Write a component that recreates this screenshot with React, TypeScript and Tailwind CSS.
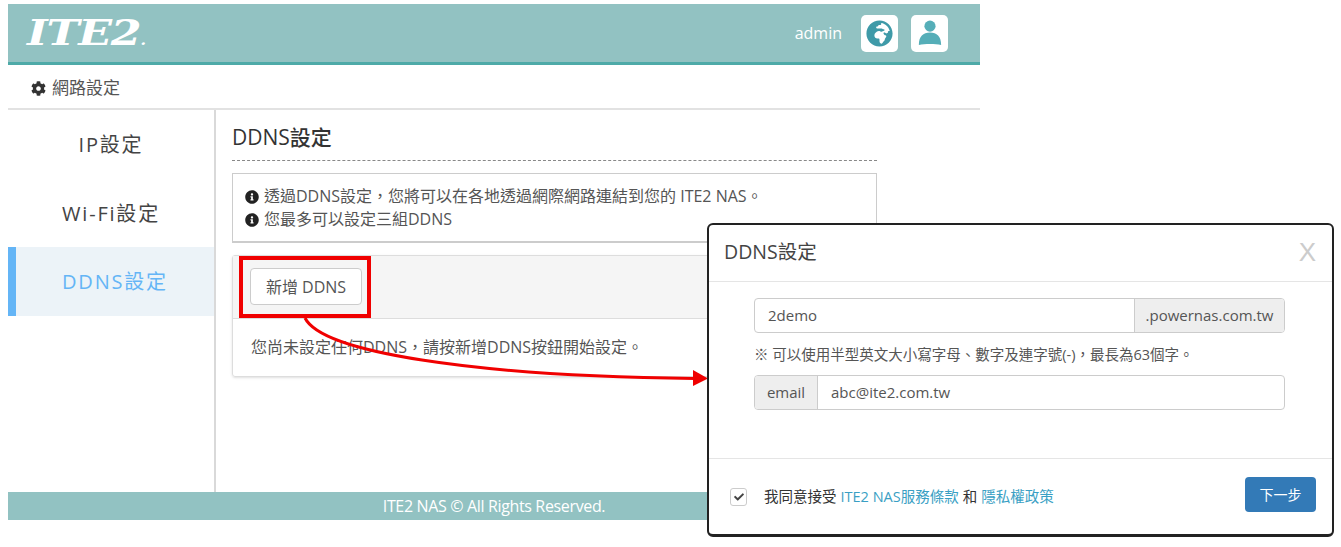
import { FaCheck, FaCog, FaGlobeAfrica, FaInfoCircle } from "react-icons/fa";

const bodyFont = "font-['Open_Sans','Noto_Sans_CJK_TC',sans-serif]";

function SideItem({ label, active }: { label: string; active?: boolean }) {
    return (
        <div
            className={
                active
                    ? "h-[68.5px] pt-[2px] flex items-center justify-center border-l-8 border-[#64b5f6] bg-[#ecf3f8] text-[#64b5f6] text-[20px] tracking-[1.8px]"
                    : "h-[68.5px] pt-[2px] flex items-center justify-center text-[#444] text-[20px] tracking-[1.8px]"
            }
        >
            {label}
        </div>
    );
}

function App() {
    return (
        <div className={`relative w-[1341px] h-[547px] overflow-hidden bg-white pt-1 pl-2 text-[#555] ${bodyFont}`}>
            <div className="w-[972px] h-[516px] flex flex-col">
                {/* Header */}
                <header className="h-[61px] shrink-0 bg-[#92c2c2] border-b-[3px] border-[#4eaaa8] flex items-center justify-between pl-[19px] pr-8">
                    <div className="text-white text-[36px] leading-none font-bold italic font-['DejaVu_Serif',serif] origin-left scale-x-[1.23] tracking-[-1px] mt-[-2px]">
                        ITE2<span className="text-[14px]">.</span>
                    </div>
                    <div className="flex items-center">
                        <span className="text-white text-[16px] mr-[19px]">admin</span>
                        <div className="w-[37px] h-[37px] rounded-[5px] bg-white flex items-center justify-center mr-[13px]">
                            <FaGlobeAfrica className="text-[#3f9aa8] text-[27px]" />
                        </div>
                        <div className="w-[37px] h-[37px] rounded-[5px] bg-white flex items-center justify-center">
                            <svg viewBox="0 0 28 32" className="w-[24px] h-[28px]" fill="#55aeb8">
                                <circle cx="14" cy="8" r="6.5" />
                                <path d="M1 30 C1 20 6 15.5 14 15.5 C22 15.5 27 20 27 30 C20 28.5 8 28.5 1 30 Z" />
                            </svg>
                        </div>
                    </div>
                </header>

                {/* Breadcrumb */}
                <div className="h-[45px] shrink-0 border-b-2 border-[#e2e2e2] flex items-center pl-[23px] pt-[3px] text-[17px] text-[#555] gap-[6px]">
                    <FaCog className="text-[#333] text-[15px]" />
                    <span>網路設定</span>
                </div>

                <div className="flex-1 flex min-h-0">
                    {/* Sidebar */}
                    <aside className="w-[208px] shrink-0 border-r-2 border-[#d9d9d9]">
                        <SideItem label="IP設定" />
                        <SideItem label="Wi-Fi設定" />
                        <SideItem label="DDNS設定" active />
                    </aside>

                    {/* Content */}
                    <main className="w-[645px] ml-[16px] pt-[13px]">
                        <h2 className="h-[38px] text-[21px] leading-[28px] font-medium text-[#333] border-b border-dashed border-[#888]">
                            DDNS設定
                        </h2>
                        <div className="mt-3 h-[70px] border border-[#ccc] border-b-2 px-3 pt-[11px] text-[16px] leading-[23px] text-[#555]">
                            <div className="flex items-center gap-[5px]">
                                <FaInfoCircle className="text-[#222] text-[14px]" />
                                <span>透過DDNS設定，您將可以在各地透過網際網路連結到您的 ITE2 NAS。</span>
                            </div>
                            <div className="flex items-center gap-[5px]">
                                <FaInfoCircle className="text-[#222] text-[14px]" />
                                <span>您最多可以設定三組DDNS</span>
                            </div>
                        </div>
                        <div className="mt-3 h-[122px] border border-[#ddd] rounded-[3px] shadow-sm">
                            <div className="h-[63px] bg-[#f5f5f5] border-b border-[#ddd] pl-[17px] pt-3">
                                <button className="w-[112px] h-[37px] bg-white border border-[#ccc] rounded-[4px] text-[16px] text-[#555]">
                                    新增 DDNS
                                </button>
                            </div>
                            <div className="pl-[18px] pt-[17px] text-[16px] leading-[22px] text-[#555]">
                                您尚未設定任何DDNS，請按新增DDNS按鈕開始設定。
                            </div>
                        </div>
                    </main>
                </div>

                {/* Footer */}
                <footer className="h-[28px] shrink-0 bg-[#92c2c2] flex items-center justify-center text-white text-[16px] tracking-[-0.35px]">
                    ITE2 NAS © All Rights Reserved.
                </footer>
            </div>

            {/* Callout: red box and arrow */}
            <div className="absolute left-[239px] top-[256px] w-[132px] h-[62px] border-4 border-[#f00000]" />
            <svg className="absolute left-0 top-0 pointer-events-none" width="1341" height="547" fill="none">
                <path d="M305 318 C 322 352, 470 376, 695 378.5" stroke="#f00000" strokeWidth="3" />
                <polygon points="693,370 708,378.5 693,386" fill="#f00000" />
            </svg>

            {/* Modal */}
            <div className="absolute left-[707px] top-[223px] w-[627px] h-[314px] flex flex-col bg-white border-2 border-[#222] rounded-[6px] border-b-[3px]">
                <div className="h-[57px] shrink-0 border-b border-[#e5e5e5] flex items-center justify-between pl-[15px] pr-[16px] pb-[2px]">
                    <span className="text-[19.5px] text-[#444]">DDNS設定</span>
                    <span className="text-[26px] text-[#ccc] font-['Liberation_Sans',sans-serif]">X</span>
                </div>
                <div className="flex-1 pt-[16px] px-[45px]">
                    <div className="flex h-[35px] w-[531px] border border-[#ccc] rounded-[4px] overflow-hidden text-[15px] text-[#555]">
                        <div className="flex-1 flex items-center pl-[13px]">2demo</div>
                        <div className="w-[150px] flex items-center justify-center bg-[#eee] border-l border-[#ccc]">
                            .powernas.com.tw
                        </div>
                    </div>
                    <p className="mt-3 text-[14.5px] leading-[20px] text-[#555] whitespace-nowrap">
                        ※ 可以使用半型英文大小寫字母、數字及連字號(-)，最長為63個字。
                    </p>
                    <div className="mt-[10px] flex h-[35px] w-[531px] border border-[#ccc] rounded-[4px] overflow-hidden text-[15px] text-[#555]">
                        <div className="w-[63px] flex items-center justify-center bg-[#eee] border-r border-[#ccc]">
                            email
                        </div>
                        <div className="flex-1 flex items-center pl-[13px]">abc@ite2.com.tw</div>
                    </div>
                </div>
                <div className="h-[76px] shrink-0 border-t border-[#e5e5e5] flex items-center justify-between pl-[21px] pr-[16px]">
                    <div className="flex items-center text-[14.5px] text-[#333]">
                        <span className="w-[17px] h-[18px] mt-[1px] border border-[#ccc] rounded-[3px] flex items-center justify-center mr-[17px]">
                            <FaCheck className="text-[#444] text-[10px]" />
                        </span>
                        <span>我同意接受</span>
                        <span className="text-[#3a9fc4] ml-1">ITE2 NAS服務條款</span>
                        <span className="mx-1">和</span>
                        <span className="text-[#3a9fc4]">隱私權政策</span>
                    </div>
                    <button className="w-[71px] h-[35px] bg-[#337ab7] rounded-[4px] text-white text-[14px] mt-[-4px]">
                        下一步
                    </button>
                </div>
            </div>
        </div>
    );
}
export default App;
